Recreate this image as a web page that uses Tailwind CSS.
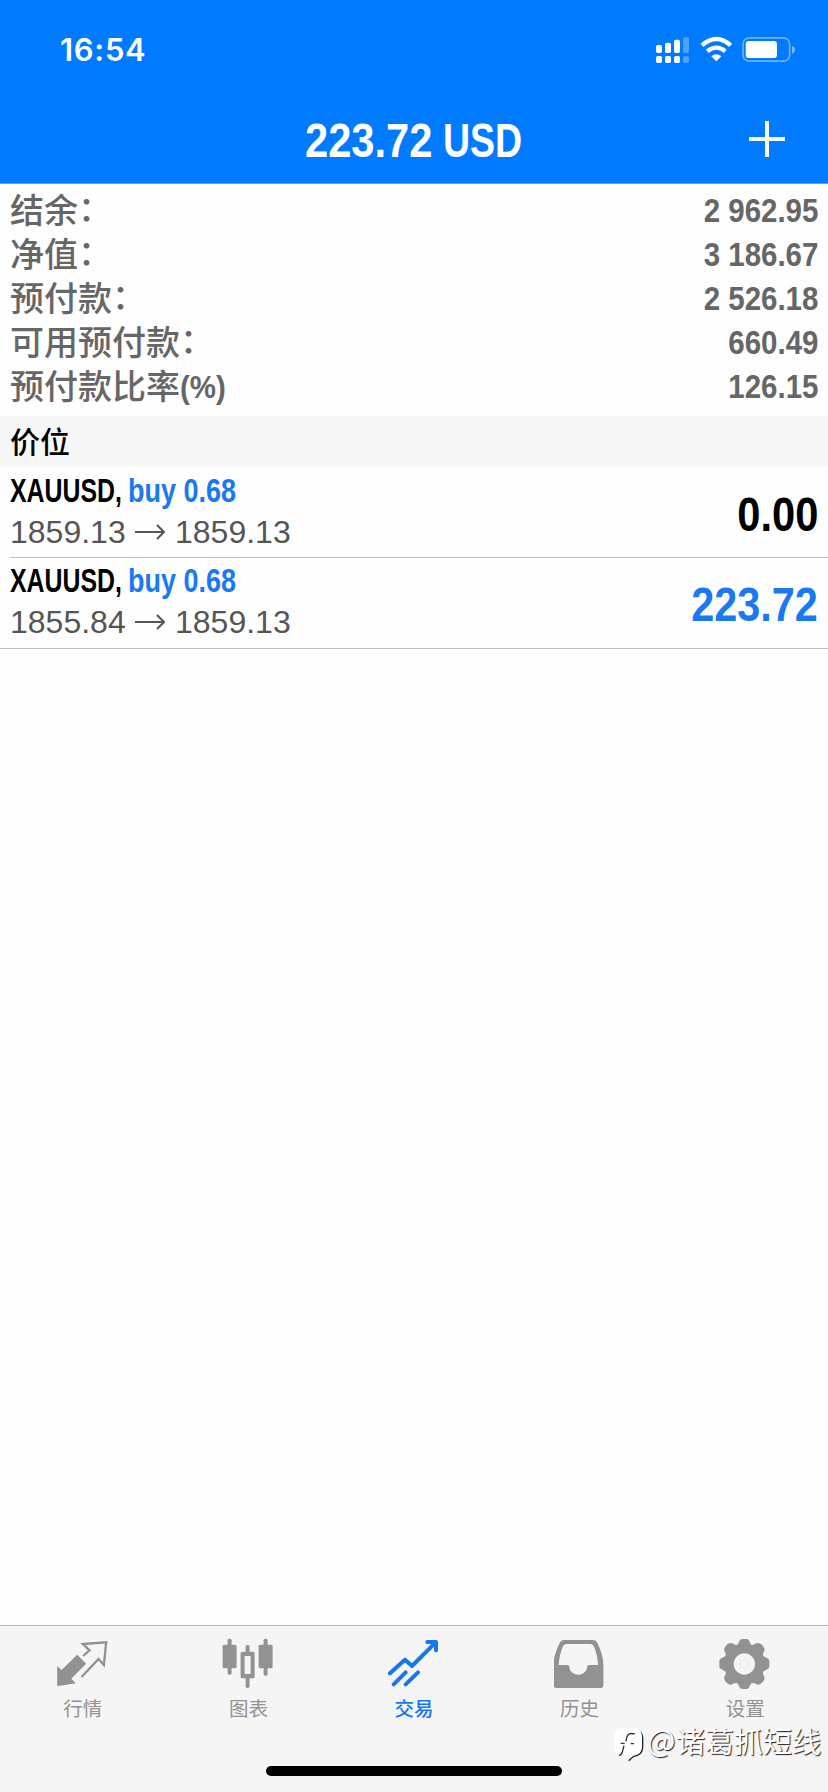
<!DOCTYPE html>
<html lang="zh-CN">
<head>
<meta charset="utf-8">
<title>交易</title>
<script src="https://cdn.jsdelivr.net/npm/@tailwindcss/browser@4"></script>
</head>
<body class="bg-white">
<div class="relative flex h-[1792px] w-[828px] flex-col overflow-hidden bg-[#fefefe] font-['Liberation_Sans','Noto_Sans_CJK_SC',sans-serif]">
  <header class="h-[184px] shrink-0 border-b border-[#5f9fe8] bg-[#007aff] text-white">
    <div class="flex h-[99px] items-center justify-between pr-[31px] pl-[60px]">
      <span class="font-['Inter',sans-serif] text-[31px] leading-none font-semibold tracking-[.7px]">16:54</span>
      <svg class="h-[30px] w-[142px]" viewBox="720 105 426 90" fill="#fff">
        <rect x="723" y="135" width="18" height="24" rx="5"/><rect x="750" y="128" width="18" height="31" rx="5"/><rect x="777" y="119" width="18" height="40" rx="5"/><rect x="804" y="112" width="18" height="47" rx="5" opacity=".3"/>
        <rect x="723" y="168" width="18" height="21" rx="5"/><rect x="750" y="168" width="18" height="21" rx="5"/><rect x="777" y="168" width="18" height="21" rx="5"/><rect x="804" y="168" width="18" height="21" rx="5" opacity=".3"/>
        <path d="M904 184L889 169Q904 157 919 169Z"/>
        <path d="M861 136Q904 98 947 136M877 154Q904 132 931 154" fill="none" stroke="#fff" stroke-width="12.500"/>
        <rect x="984" y="113.500" width="140" height="70" rx="19" fill="none" stroke="#fff" stroke-width="5" opacity=".42"/>
        <rect x="992" y="123" width="94" height="51" rx="10"/><path d="M1131 137Q1140 141 1140 149T1131 161Z" opacity=".5"/>
      </svg>
    </div>
    <div class="grid h-[84px] grid-cols-[1fr_220px_1fr] items-center">
      <span></span>
      <div class="flex h-14 pl-[1px] text-5xl leading-[56px] font-bold whitespace-nowrap">
        <span class="w-[138px] origin-left scale-x-[.868]">223.72</span>
        <span class="origin-left scale-x-[.78]">USD</span>
      </div>
      <svg class="mr-[43px] mb-[5px] h-9 w-9 justify-self-end" viewBox="0 0 36 36" stroke="#fff" stroke-width="4"><path d="M0 18H36M18 0V36"/></svg>
    </div>
  </header>

  <section class="h-[232px] shrink-0 px-[10px] pt-[5px] text-[34px] leading-[44px] font-medium text-[#666]">
    <div class="flex h-11 justify-between"><span>结余<span class="inline-block -translate-y-[2px]">：</span></span><span class="origin-right scale-x-[.88] text-[33.5px] font-bold">2 962.95</span></div>
    <div class="flex h-11 justify-between"><span>净值<span class="inline-block -translate-y-[2px]">：</span></span><span class="origin-right scale-x-[.88] text-[33.5px] font-bold">3 186.67</span></div>
    <div class="flex h-11 justify-between"><span>预付款<span class="inline-block -translate-y-[2px]">：</span></span><span class="origin-right scale-x-[.88] text-[33.5px] font-bold">2 526.18</span></div>
    <div class="flex h-11 justify-between"><span>可用预付款<span class="inline-block -translate-y-[2px]">：</span></span><span class="origin-right scale-x-[.88] text-[33.5px] font-bold">660.49</span></div>
    <div class="flex h-11 justify-between"><span class="flex">预付款比率<span class="origin-left scale-x-[.92] text-[32px] font-bold">(%)</span></span><span class="origin-right scale-x-[.88] text-[33.5px] font-bold">126.15</span></div>
  </section>

  <h2 class="h-[51px] shrink-0 bg-[#f6f6f6] pl-[10px] text-[30px] leading-[54px] font-medium text-black">价位</h2>

  <main class="flex-1">
    <div class="ml-[10px] flex h-[91px] items-center justify-between border-b border-[#bfbfbf] pr-[10px]">
      <div>
        <div class="flex h-[41px] text-[32.5px] leading-[41px] font-bold whitespace-nowrap"><span class="w-[118px] origin-left scale-x-[.765] text-black">XAUUSD,</span><span class="origin-left scale-x-[.83] text-[#1a78f0]">buy 0.68</span></div>
        <div class="flex h-[41px] items-center text-[32px] leading-[41px] text-[#555]"><span class="w-[125px]">1859.13</span><svg class="mr-[10px] h-5 w-[30px]" viewBox="0 0 30 20" fill="none" stroke="#555" stroke-width="2"><path d="M0 9H29M22 2L29 9L22 16"/></svg><span>1859.13</span></div>
      </div>
      <span class="origin-right scale-x-[.868] pt-[6px] text-5xl font-bold text-black">0.00</span>
    </div>
    <div class="flex h-[91px] items-center justify-between border-b border-[#bfbfbf] px-[10px]">
      <div class="pb-[2px]">
        <div class="flex h-[41px] text-[32.5px] leading-[41px] font-bold whitespace-nowrap"><span class="w-[118px] origin-left scale-x-[.765] text-black">XAUUSD,</span><span class="origin-left scale-x-[.83] text-[#1a78f0]">buy 0.68</span></div>
        <div class="flex h-[41px] items-center text-[32px] leading-[41px] text-[#555]"><span class="w-[125px]">1855.84</span><svg class="mr-[10px] h-5 w-[30px]" viewBox="0 0 30 20" fill="none" stroke="#555" stroke-width="2"><path d="M0 9H29M22 2L29 9L22 16"/></svg><span>1859.13</span></div>
      </div>
      <span class="origin-right scale-x-[.862] pt-[4px] text-5xl font-bold text-[#1a78f0]">223.72</span>
    </div>
  </main>

  <footer class="flex h-[167px] shrink-0 flex-col items-center border-t border-[#b2b2b2] bg-[#f5f5f5]">
    <nav class="grid h-[141px] w-full grid-cols-5 pt-3 text-[19.5px] leading-[30px] text-[#929292]">
      <div class="flex flex-col items-center gap-[4px]">
        <svg class="size-[52px]" viewBox="80.4 84 156 156" fill="#929292"><path d="M141 134L168 161L123 206L137 220L84 228Q81 228 81 225V168L94 180Z"/><path d="M154 201L205 147L221 165L228 97L158 102L178 121L159 138" fill="none" stroke="#929292" stroke-width="7"/></svg>
        <span>行情</span>
      </div>
      <div class="flex flex-col items-center gap-[4px]">
        <svg class="size-[52px]" viewBox="577.2 84 156 156" fill="#929292"><rect x="579" y="104" width="42" height="71" rx="5"/><rect x="594" y="86" width="12" height="108" rx="5"/><rect x="687" y="104" width="42" height="71" rx="5"/><rect x="702" y="86" width="12" height="111" rx="5"/><path d="M639 125H648V110Q648 105 654 105T660 110V125H670Q675 125 675 130V200Q675 205 670 205H660V229Q660 234 654 234T648 229V205H638Q633 205 633 200V130Q633 125 639 125ZM645 138V192H663V138Z" fill-rule="evenodd"/></svg>
        <span>图表</span>
      </div>
      <div class="flex flex-col items-center gap-[4px] font-medium text-[#1476f2]">
        <svg class="size-[52px]" viewBox="84 84 156 156" fill="none" stroke="#1476f2" stroke-width="12" stroke-linecap="round" stroke-linejoin="round"><path d="M90 190L135 149L156 168L227 97M202 96H228V121M137 187L101 223M174 187L137 223"/></svg>
        <span>交易</span>
      </div>
      <div class="flex flex-col items-center gap-[4px]">
        <svg class="size-[52px]" viewBox="580.8 84 156 156" fill="#929292"><path d="M612 90H697Q707 90 711 99C722 122 729 143 729 166V224Q729 234 719 234H589Q579 234 579 224V166C579 143 587 121 598 99Q602 90 612 90ZM617 102Q610 102 607 110C600 127 596 145 595 165H621Q627 165 627 171V174A27 25 0 0 0 680 174V171Q680 165 686 165H713C712 145 708 127 701 110Q698 102 691 102Z" fill-rule="evenodd"/></svg>
        <span>历史</span>
      </div>
      <div class="flex flex-col items-center gap-[4px]">
        <svg class="size-[52px]" viewBox="386 84 156 156" fill="#929292">
          <path fill-rule="evenodd" d="M455 87H469Q476 87 478 95Q482 109 492 103C502 97 508 98 515 105S526 120 519 129Q514 139 528 143Q537 146 537 154V169Q537 177 528 179Q514 184 519 194C526 204 522 211 515 218S502 226 492 220Q482 215 478 229Q476 237 469 237H455Q448 237 446 229Q442 215 432 220C422 226 416 225 409 218S398 204 405 194Q410 184 396 179Q387 177 387 169V154Q387 146 396 143Q410 139 405 129C398 120 402 112 409 105S422 97 432 103Q442 109 446 95Q448 87 455 87ZM462 130A32 32 0 1 0 462 194A32 32 0 1 0 462 130Z"/>
          <circle cx="462" cy="162" r="13" fill="none" stroke="#e7e7e7" stroke-width="3"/>
        </svg>
        <span>设置</span>
      </div>
    </nav>
    <div class="mt-[-1px] h-[10px] w-[296px] rounded-full bg-black"></div>
  </footer>

  <div class="absolute top-[1722px] left-[613px] flex items-start whitespace-nowrap text-white">
    <svg class="mt-[5px] h-[35px] w-[34px] shrink-0" viewBox="69 350 102 105">
      <path d="M134 358Q158 362 158 382V410Q158 434 131 438L116 451" fill="none" stroke="#222" stroke-width="4"/>
      <path d="M93 354H134Q155 356 155 377V409Q155 433 129 435L116 447L109 435H93Q72 435 72 414V376Q72 354 93 354Z" fill="#fff"/>
      <path d="M134 371Q114 365 110 382L108 393M102 406L97 425Q94 434 87 435M92 399H104M122 400H132" fill="none" stroke="#333" stroke-width="4"/>
    </svg>
    <span class="-mt-[1px] w-[29px] font-['Noto_Sans_CJK_SC',sans-serif] text-[30px] leading-[36px] [text-shadow:1px_1px_1px_#222]">@</span>
    <span class="font-['Noto_Sans_CJK_SC',sans-serif] text-[29px] leading-[36px] [text-shadow:1px_1px_1px_#222]">诸葛抓短线</span>
  </div>
</div>
</body>
</html>
